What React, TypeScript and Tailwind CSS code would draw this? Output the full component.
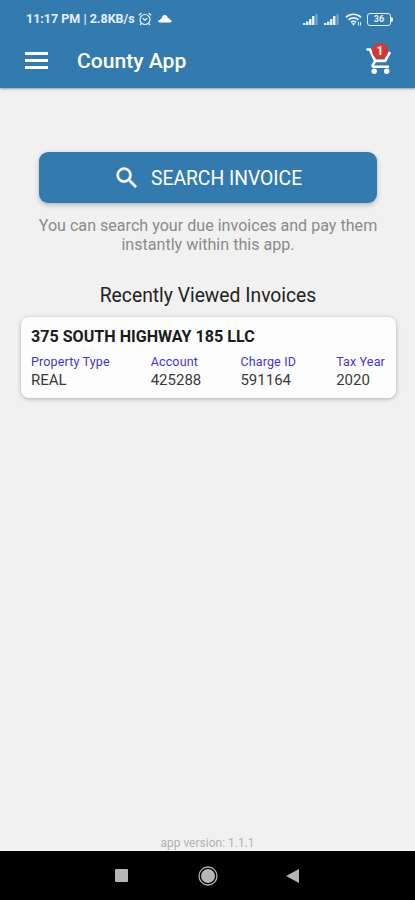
const fields = [
  { label: "Property Type", value: "REAL", width: "w-[120px]" },
  { label: "Account", value: "425288", width: "w-[90px]" },
  { label: "Charge ID", value: "591164", width: "w-[96px]" },
  { label: "Tax Year", value: "2020", width: "w-[50px]" },
];

const Signal = () => (
  <svg className="w-4 h-3" viewBox="0 0 16 12" fill="currentColor">
    <path d="M0 10h2.5v2H0zM3 8.5h2.5V12H3zM6 6h2.5v6H6zM9 3h2.5v9H9z" />
    <path opacity="0.4" d="M12.5 1h2v11h-2z" />
  </svg>
);

const StatusBar = () => (
  <div className="flex items-center h-[38px] pl-[26px] pr-[22px] text-[#e3eff8]">
    <span className="text-[12.5px] font-bold whitespace-nowrap w-[110px]">
      11:17 PM | 2.8KB/s
    </span>
    <svg
      className="w-[14px] h-[14px] ml-[2px]"
      fill="none"
      stroke="currentColor"
      strokeWidth="1.2"
      viewBox="0 0 14 14"
    >
      <circle cx="7" cy="7.5" r="5" />
      <path d="M4.8 6.2L7 8.2l2.2-2M.8 3.2L3.4 1M13.2 3.2L10.6 1M3.3 11.5L2 13M10.7 11.5L12 13" />
    </svg>
    <svg
      className="w-[14px] h-[9px] ml-[6px] mb-[2px]"
      fill="white"
      viewBox="0 0 14 9"
    >
      <path d="M1.8 8.5C.8 8.5.3 8 .3 7.3c0-.8.6-1.3 1.5-1.4C2 5 2.8 4.5 3.6 4.4 4 2.3 5 1 6.600 1c1.700 0 2.900 1.200 3.200 3 1.400.1 2.200.9 2.400 2 .9.100 1.500.6 1.500 1.300 0 .7-.6 1.200-1.500 1.200z" />
    </svg>
    <div className="flex items-center ml-auto">
      <Signal />
      <span className="ml-[5px] flex">
        <Signal />
      </span>
      <svg
        className="w-[17px] h-[13px] ml-[5px]"
        fill="none"
        stroke="currentColor"
        strokeWidth="1.7"
        viewBox="0 0 17 13"
      >
        <path d="M1 4.300C5 .2 12 .2 16 4.300M3.500 6.900c2.700-2.700 7.300-2.700 10 0M6 9.400c1.500-1.500 3.500-1.500 5 0" />
        <path fill="currentColor" stroke="none" d="M6.500 10.300h4l-2 2.500zM13 9h1v3.500h-1zM15 9h1v3.500h-1z" />
      </svg>
      <span className="flex items-center ml-[5px]">
        <span className="flex items-center justify-center w-[24px] h-[13px] rounded-[3px] border-[1.5px] border-current text-[9px] leading-none font-bold">
          36
        </span>
        <span className="w-[2px] h-[5px] rounded-r-sm bg-current"></span>
      </span>
    </div>
  </div>
);

const App = () => {
  return (
    <div className="flex flex-col h-[900px] w-full bg-[#f1f1f1] font-['Roboto',sans-serif] overflow-hidden">
      <header className="h-[88px] bg-[#337bae] text-white shadow-[0_1px_2px_rgba(60,60,110,0.5)]">
        <StatusBar />
        <div className="flex items-center h-[45px] pl-[25px] pr-[23px]">
          <button className="flex flex-col justify-between w-[23px] h-[17px]">
            <span className="w-full h-[3px] bg-white"></span>
            <span className="w-full h-[3px] bg-white"></span>
            <span className="w-full h-[3px] bg-white"></span>
          </button>
          <h1 className="ml-[29px] text-[21.1px] font-medium leading-none">
            County App
          </h1>
          <button className="relative ml-auto w-[26px] h-[28px]">
            <svg
              className="w-[26px] h-[28px]"
              fill="none"
              stroke="currentColor"
              strokeWidth="2.6"
              viewBox="0 0 26 28"
            >
              <path d="M.5 2.5h3.4l5.200 11.400h10L24 5M9.300 13.900l-2.500 4.300c-.4.800 0 1.500.9 1.500H23" />
              <circle cx="8.2" cy="24.2" r="2.7" fill="currentColor" stroke="none" />
              <circle cx="20.7" cy="24.2" r="2.7" fill="currentColor" stroke="none" />
            </svg>
            <span className="absolute left-[6px] -top-[4px] flex items-center justify-center w-4 h-4 rounded-full bg-[#dc3530] text-[12px] leading-none font-bold">
              1
            </span>
          </button>
        </div>
      </header>

      <main className="flex flex-col flex-1 px-[20px] pt-[64px]">
        <button className="flex items-center ml-[19px] mr-[18px] h-[51px] pl-[74px] rounded-[9px] bg-[#337bae] text-white shadow-[0_2px_5px_rgba(0,0,0,0.25)]">
          <svg
            className="w-[28px] h-[28px]"
            fill="currentColor"
            stroke="currentColor"
            strokeWidth="0.3"
            viewBox="0 0 24 24"
          >
            <path d="M15.5 14h-.79l-.28-.27A6.471 6.471 0 0 0 16 9.5 6.5 6.5 0 1 0 9.5 16c1.61 0 3.09-.59 4.23-1.57l.27.28v.79l5 4.99L20.49 19l-4.99-5zm-6 0C7.01 14 5 11.99 5 9.5S7.01 5 9.5 5 14 7.01 14 9.5 11.99 14 9.5 14z" />
          </svg>
          <span className="ml-[10px] mt-[3px] text-[19.3px] leading-none whitespace-nowrap">
            SEARCH INVOICE
          </span>
        </button>
        <p className="mt-[13px] ml-[1px] text-center text-[16.1px] leading-[19px] text-[#8b8b8b] whitespace-nowrap">
          You can search your due invoices and pay them
          <br />
          instantly within this app.
        </p>

        <h2 className="mt-[30px] ml-[1px] text-center text-[19.3px] leading-[24px] text-[#222222]">
          Recently Viewed Invoices
        </h2>
        <div className="mt-[9px] h-[81px] mr-[-1px] ml-[1px] px-[10px] pt-[10px] rounded-[8px] bg-[#fdfdfd] shadow-[0_1px_4px_rgba(0,0,0,0.28)]">
          <h3 className="text-[16.1px] leading-[20px] font-bold text-[#1b1b1b]">
            375 SOUTH HIGHWAY 185 LLC
          </h3>
          <div className="flex mt-[6px] whitespace-nowrap">
            {fields.map((field) => (
              <div key={field.label} className={field.width}>
                <div className="text-[12.5px] leading-[18px] tracking-[0.15px] text-[#4336cf]">
                  {field.label}
                </div>
                <div className="text-[15px] leading-[19px] text-[#3a3a3a]">
                  {field.value}
                </div>
              </div>
            ))}
          </div>
        </div>
        <p className="mt-auto mb-[1px] text-center text-[12px] leading-[14px] text-[#b2b2b2]">
          app version: 1.1.1
        </p>
      </main>

      <nav className="flex items-center h-[49px] bg-black text-[#b5b5b5]">
        <span className="w-[13px] h-[13px] ml-[115px] rounded-[1px] bg-current"></span>
        <svg
          className="w-5 h-5 ml-[70px]"
          fill="none"
          stroke="currentColor"
          viewBox="0 0 20 20"
        >
          <circle cx="10" cy="10" r="9" strokeWidth="1.3" />
          <circle cx="10" cy="10" r="7" fill="currentColor" stroke="none" />
        </svg>
        <svg
          className="w-[13px] h-[14px] ml-[68px]"
          fill="currentColor"
          viewBox="0 0 13 14"
        >
          <path d="M13 0v14L0 7z" />
        </svg>
      </nav>
    </div>
  );
};

export default App;
